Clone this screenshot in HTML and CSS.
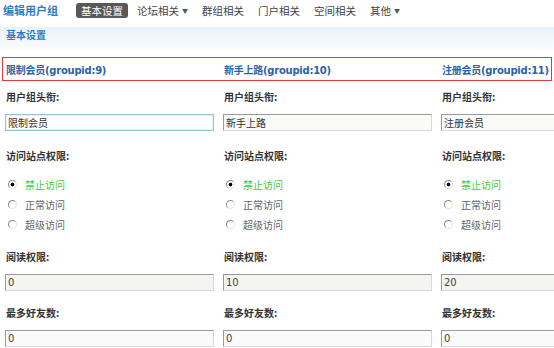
FILE: index.html
```html
<!DOCTYPE html>
<html lang="zh-CN">
<head>
<meta charset="utf-8">
<title>编辑用户组</title>
<link rel="stylesheet" href="styles.css">
</head>
<body>
<div class="top">
  <span class="title">编辑用户组</span>
  <span class="tab active">基本设置</span>
  <span class="tab">论坛相关<i class="arr">▼</i></span>
  <span class="tab">群组相关</span>
  <span class="tab">门户相关</span>
  <span class="tab">空间相关</span>
  <span class="tab">其他<i class="arr">▼</i></span>
</div>
<div class="band">基本设置</div>
<div class="groups">
  <span class="gname">限制会员(groupid:9)</span>
  <span class="gname">新手上路(groupid:10)</span>
  <span class="gname">注册会员(groupid:11)</span>
</div>
<div class="cols">
  <div class="col">
    <div class="label first">用户组头衔:</div>
    <div class="input focus">限制会员</div>
    <div class="label gap">访问站点权限:</div>
    <div class="radios">
      <div class="radio on"><span class="dot"></span>禁止访问</div>
      <div class="radio"><span class="dot"></span>正常访问</div>
      <div class="radio"><span class="dot"></span>超级访问</div>
    </div>
    <div class="label gap2">阅读权限:</div>
    <div class="input ro num">0</div>
    <div class="label gap3">最多好友数:</div>
    <div class="input num">0</div>
  </div>
  <div class="col">
    <div class="label first">用户组头衔:</div>
    <div class="input">新手上路</div>
    <div class="label gap">访问站点权限:</div>
    <div class="radios">
      <div class="radio on"><span class="dot"></span>禁止访问</div>
      <div class="radio"><span class="dot"></span>正常访问</div>
      <div class="radio"><span class="dot"></span>超级访问</div>
    </div>
    <div class="label gap2">阅读权限:</div>
    <div class="input ro num">10</div>
    <div class="label gap3">最多好友数:</div>
    <div class="input num">0</div>
  </div>
  <div class="col last">
    <div class="label first">用户组头衔:</div>
    <div class="input">注册会员</div>
    <div class="label gap">访问站点权限:</div>
    <div class="radios">
      <div class="radio on"><span class="dot"></span>禁止访问</div>
      <div class="radio"><span class="dot"></span>正常访问</div>
      <div class="radio"><span class="dot"></span>超级访问</div>
    </div>
    <div class="label gap2">阅读权限:</div>
    <div class="input ro num">20</div>
    <div class="label gap3">最多好友数:</div>
    <div class="input num">0</div>
  </div>
</div>
</body>
</html>
```
FILE: styles.css
```css
html, body {
  margin: 0;
  padding: 0;
  background: #fff;
}
body {
  width: 554px;
  height: 348px;
  overflow: hidden;
  font-family: "Noto Sans CJK SC", sans-serif;
  font-size: 10px;
  color: #333;
}
.top {
  display: flex;
  align-items: center;
  height: 20px;
  padding-left: 3px;
}
.title {
  font-size: 11px;
  font-weight: bold;
  color: #2a7fc4;
  margin-right: 18px;
  line-height: 14px;
}
.tab {
  font-size: 10.5px;
  line-height: 15px;
  height: 15px;
  padding: 0 5px;
  margin-right: 4px;
  color: #444;
  border-radius: 3px;
}
.tab.active {
  background: #585858;
  color: #fff;
}
.arr {
  font-style: normal;
  font-size: 6px;
  margin-left: 3px;
  vertical-align: 2px;
  color: #555;
}
.band {
  margin-top: 7px;
  height: 24px;
  line-height: 16px;
  padding-left: 6px;
  font-weight: bold;
  color: #2a7fc4;
  background: linear-gradient(to bottom, #e9f2fa, #f7fafd 80%, #fff);
}
.groups {
  margin: 6px 2px 0 2px;
  height: 22px;
  border: 1px solid #e2393f;
  display: flex;
  align-items: center;
  padding-left: 3px;
  overflow: hidden;
}
.gname {
  flex: 0 0 218px;
  font-family: "DejaVu Sans", "Noto Sans CJK SC", sans-serif;
  font-weight: bold;
  font-size: 10px;
  letter-spacing: -0.25px;
  color: #2b63a4;
  white-space: nowrap;
}
.gname:last-child {
  flex: 0 0 auto;
}
.cols {
  display: flex;
  padding-left: 5px;
  overflow: hidden;
}
.col {
  flex: 0 0 218px;
}
.col.last {
  flex: 1 1 auto;
  min-width: 0;
  overflow: hidden;
}
.col.last .input {
  border-right: 0;
}
.label {
  font-weight: bold;
  line-height: 16px;
  height: 16px;
  padding-left: 1px;
  color: #333;
  white-space: nowrap;
}
.label.first { margin-top: 8px; }
.label.gap { margin-top: 17px; }
.label.gap2 { margin-top: 15px; }
.label.gap3 { margin-top: 14px; }
.input {
  margin-top: 9px;
  width: 205px;
  height: 15px;
  line-height: 15px;
  padding-left: 2px;
  border: 1px solid;
  border-color: #9a9a9a #d8d8d8 #d8d8d8 #9a9a9a;
  background: #fafaf8;
  color: #333;
  white-space: nowrap;
}
.input.focus {
  border-color: #92c4de;
  background: #fff;
  box-shadow: inset 0 0 0 1px #e3f1f8;
}
.input.ro {
  background: #f4f4f0;
}
.input.num {
  font-family: "DejaVu Sans", sans-serif;
  color: #444;
}
.radios {
  margin-top: 10px;
}
.radio {
  display: flex;
  align-items: center;
  height: 20px;
  color: #666;
  white-space: nowrap;
}
.radio.on {
  color: #3ccc3c;
}
.dot {
  width: 7px;
  height: 7px;
  margin-left: 3px;
  margin-right: 8px;
  border-radius: 50%;
  border: 1px solid;
  border-color: #8a8a8a #e4e4e4 #e4e4e4 #8a8a8a;
  background: #fff;
}
.radio.on .dot {
  background: radial-gradient(circle, #000 0, #000 1.6px, #fff 2.2px);
}
```
